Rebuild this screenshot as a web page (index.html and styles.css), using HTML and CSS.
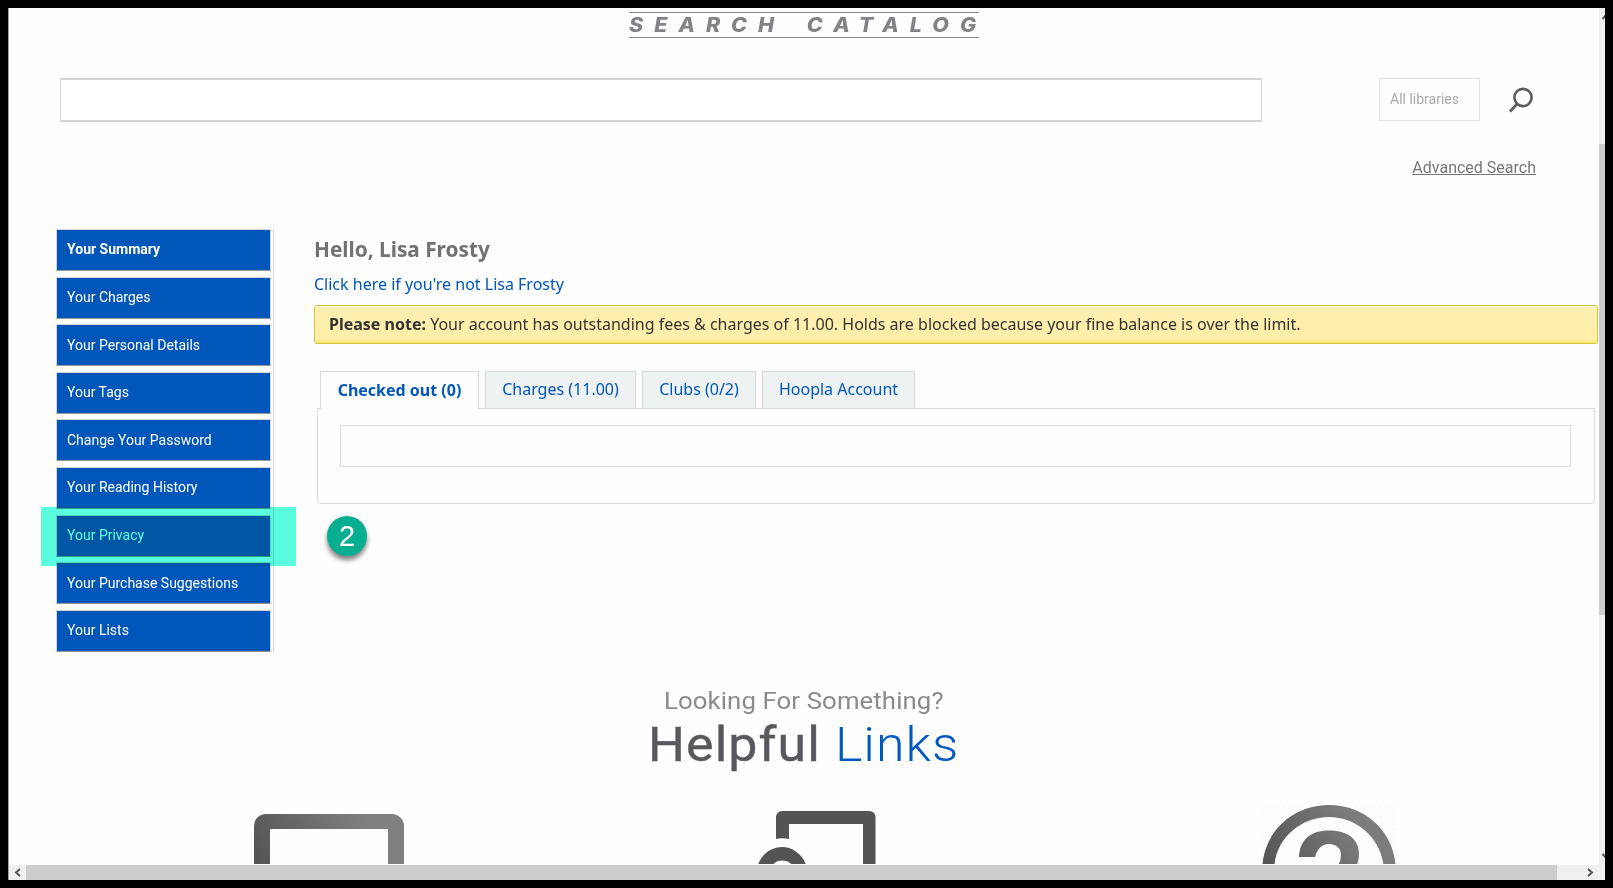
FILE: index.html
```html
<!DOCTYPE html>
<html lang="en">
<head>
<meta charset="utf-8">
<title>Your library home</title>
<link rel="stylesheet" href="styles.css">
</head>
<body>
<div class="window">
  <div class="pane">
    <main class="page">
      <header class="catalog"><h1 class="catalog-title"><span class="catalog-text">SEARCH CATALOG</span></h1></header>
      <form class="search">
        <div class="search-input"></div>
        <div class="library-select">All libraries</div>
        <svg class="search-icon" viewBox="0 0 26 28" width="26" height="28"><circle cx="15" cy="11.500" r="8.6"/><path d="M9 18 2 25.500"/></svg>
      </form>
      <div class="advanced"><a class="advanced-link">Advanced Search</a></div>
      <div class="account">
        <nav class="menu">
          <a class="menu-item current">Your Summary</a>
          <a class="menu-item">Your Charges</a>
          <a class="menu-item low">Your Personal Details</a>
          <a class="menu-item">Your Tags</a>
          <a class="menu-item low">Change Your Password</a>
          <a class="menu-item">Your Reading History</a>
          <a class="menu-item">Your Privacy</a>
          <a class="menu-item low">Your Purchase Suggestions</a>
          <a class="menu-item">Your Lists</a>
          <div class="highlight"></div>
        </nav>
        <section class="summary">
          <h2 class="hello">Hello, Lisa Frosty</h2>
          <a class="not-you">Click here if you're not Lisa Frosty</a>
          <div class="alert"><b>Please note:</b> Your account has outstanding fees &amp; charges of 11.00. Holds are blocked because your fine balance is over the limit.</div>
          <div class="tabs">
            <a class="tab active">Checked out (0)</a>
            <a class="tab charges">Charges (11.00)</a>
            <a class="tab clubs">Clubs (0/2)</a>
            <a class="tab hoopla">Hoopla Account</a>
          </div>
          <div class="panel"><div class="panel-row"></div></div>
          <div class="step">2</div>
        </section>
      </div>
      <section class="links">
        <p class="links-lead">Looking For Something?</p>
        <h2 class="links-title"><span class="helpful">Helpful</span> <span class="thin">Links</span></h2>
        <div class="link-icons">
          <svg class="icon-screen" viewBox="0 0 150 51" width="150" height="51">
            <defs><linearGradient id="g1" gradientUnits="userSpaceOnUse" x1="0" y1="51" x2="110" y2="0"><stop offset="0" stop-color="#535353"/><stop offset="1" stop-color="#808080"/></linearGradient></defs>
            <path fill="url(#g1)" d="M0 51V12A12 12 0 0 1 12 0H138A12 12 0 0 1 150 12V51H134V15H16V51Z"/>
          </svg>
          <svg class="icon-device" viewBox="0 0 120 54" width="120" height="54" fill="#545454">
            <path d="M18 28V6A6 6 0 0 1 24 0H111.500A6 6 0 0 1 117.500 6V54H105V13H31V28Q24 26.500 18 28Z"/>
            <path d="M0 54C3 44 13 36 24 36S45 44 48 54H34C30 48 18 48 15 54Z"/>
          </svg>
          <svg class="icon-help" viewBox="0 0 134 60" width="134" height="60">
            <defs>
              <linearGradient id="g2" gradientUnits="userSpaceOnUse" x1="0" y1="60" x2="85" y2="10"><stop offset="0" stop-color="#535353"/><stop offset="1" stop-color="#7c7c7c"/></linearGradient>
              <pattern id="hatch" width="6" height="6" patternUnits="userSpaceOnUse"><path d="M0 6 6 0" stroke="#f7f7f7"/></pattern>
            </defs>
            <path fill="url(#hatch)" d="M1 1H133V60H1Z"/>
            <path fill="url(#g2)" d="M.5 60C3 26 31 0 67 0S131 26 133.500 60H121.500C118 32 94 12 67 12S15 32 12.500 60Z"/>
            <path fill="url(#g2)" d="M37 52C38 34 49 25.500 67 25.500C87 25.500 97 35 97 49Q97 55 95 60H76Q79 56 79 50C79 43 74 39 67 39C59 39 55 45 53 52Z"/>
          </svg>
        </div>
      </section>
    </main>
    <div class="hbar">
      <svg class="arrow-left" viewBox="0 0 17 15" width="17" height="15"><path d="M11 4 7 7.500 11 11"/></svg>
      <div class="hbar-thumb"></div>
      <svg class="arrow-right" viewBox="0 0 17 15" width="17" height="15"><path d="M7 4 11 7.500 7 11"/></svg>
    </div>
  </div>
  <div class="vbar">
    <svg class="arrow-up" viewBox="0 0 6 6" width="6" height="6"><path d="M3.500 4 8-1"/></svg>
    <div class="vbar-thumb"></div>
    <svg class="arrow-down" viewBox="0 0 6 6" width="6" height="6"><path d="M3.500 1 8 6"/></svg>
  </div>
</div>
</body>
</html>
```
FILE: styles.css
```css
* { box-sizing: border-box; }
body { margin: 0; background: #000; }
.window { display: flex; height: 888px; width: 1613px; border: 8px solid #000; overflow: hidden; background: #fefefe; }
.pane { flex: 1; display: flex; flex-direction: column; border-left: 1px solid #a0a0a0; min-width: 0; }
.page { height: 856px; overflow: hidden; background: #fefefe; margin-bottom: 1px; }

.catalog { display: flex; justify-content: center; padding: 4px 0 0 0; width: 1590px; }
.catalog-title { margin: 0; width: 350px; height: 26px; border-top: 1px solid #86888b; border-bottom: 1px solid #86888b; font: italic 800 19.5px/25px "Inter", sans-serif; color: #818387; letter-spacing: 10px; word-spacing: 5.5px; white-space: nowrap; }
.catalog-text { display: block; transform: scaleX(1.1); transform-origin: left; }

.search { display: flex; align-items: center; margin: 40px 0 0 51px; height: 44px; }
.search-input { width: 1202px; height: 44px; border: solid #d5d5d5; border-width: 2px 1px; background: #fff; }
.library-select { width: 101px; height: 43px; margin: 0 28px 1px 117px; padding-left: 10px; border: 1px solid #e2e2e2; font: 14px/41px Roboto, sans-serif; color: #aaa; }
.search-icon { fill: none; stroke: #5a5a5a; stroke-width: 2.6; }
.advanced { display: flex; justify-content: flex-end; padding: 36px 63px 0 0; }
.advanced-link { font: 16px/20px Roboto, sans-serif; color: #777; text-decoration: underline; }

.account { display: flex; height: 423px; margin: 51px 0 0 47px; }
.menu { position: relative; width: 218px; border-right: 1px solid #d8d8d8; display: flex; flex-direction: column; gap: 5.6px; }
.menu-item { width: 215px; height: 42px; padding-left: 10px; border: 1px solid #d4d4d4; border-bottom-color: #999; background: #0056b9; color: #fff; font: 14px/39.4px Roboto, sans-serif; }
.low { line-height: 40px; }
.current { font-weight: 700; }
.highlight { position: absolute; left: -15px; top: 278px; width: 255px; height: 59px; background: #5affdf; mix-blend-mode: multiply; }

.summary { margin-left: 40px; width: 1284px; font: 16px/22px "Noto Sans", sans-serif; }
.hello { margin: 6px 0 0; font-size: 20.8px; line-height: 28px; color: #727272; }
.not-you { display: block; margin-top: 10px; color: #0056b9; }
.alert { margin-top: 10px; height: 39px; padding-left: 14px; border: 1px solid #d6c43a; border-radius: 3px; background: linear-gradient(#fff7d6, #ffefb0 9%, #ffefa8 90%, #fbe56e); color: #333; line-height: 36px; white-space: nowrap; }
.tabs { position: relative; display: flex; gap: 6px; margin: 27px 0 -1px 6px; }
.tab { height: 37px; border: 1px solid #d8d8d8; border-bottom: 0; background: #eff2f3; color: #0056b9; line-height: 34px; text-align: center; white-space: nowrap; }
.active { width: 159px; height: 38px; background: #fefefe; font-weight: 700; line-height: 36px; }
.charges { width: 151px; }
.clubs { width: 114px; }
.hoopla { width: 153px; }
.panel { width: 1278px; height: 96px; margin-left: 3px; padding: 16px 23px 0 22px; border: 1px solid #d8d8d8; border-radius: 0 0 4px 4px; }
.panel-row { height: 42px; border: 1px solid #dcdcdc; }
.step { width: 40px; height: 40px; margin: 12px 0 0 13px; border-radius: 50%; background: #08ae90; color: #fff; font: 29px/40px "Liberation Sans", sans-serif; text-align: center; box-shadow: 0 4px 5px rgba(0,0,0,.5); }

.links { width: 1590px; padding-top: 33px; }
.links-lead { margin: 0 0 0 655px; font: 24.3px/31px Roboto, sans-serif; letter-spacing: .1px; color: #8a8b8e; white-space: nowrap; transform: scaleX(1.06); transform-origin: left; }
.links-title { margin: 0 0 0 639px; font: 400 48px/57px Roboto, sans-serif; letter-spacing: 1px; color: #58595d; white-space: nowrap; transform: scaleX(1.08); transform-origin: left; }
.helpful { -webkit-text-stroke: .4px #58595d; }
.thin { font-weight: 300; color: #0059c1; }
.link-icons { display: flex; align-items: flex-end; height: 92px; padding-left: 245px; }
.icon-device { margin-left: 353.5px; }
.icon-help { margin-left: 384.5px; }

.hbar { display: flex; height: 15px; background: #f0f0f0; margin-right: 1px; }
.hbar-thumb { width: 1531px; background: #cdcdcd; }
.arrow-left, .arrow-right { fill: none; stroke: #555; stroke-width: 2; }
.arrow-right { margin-left: 24px; }
.vbar { width: 6px; display: flex; flex-direction: column; background: #f0f0f0; }
.arrow-up, .arrow-down { fill: none; stroke: #555; stroke-width: 2; }
.arrow-up { margin-top: 7px; }
.vbar-thumb { height: 471px; margin-top: 123px; background: #cdcdcd; }
.arrow-down { margin-top: 238px; }
```
